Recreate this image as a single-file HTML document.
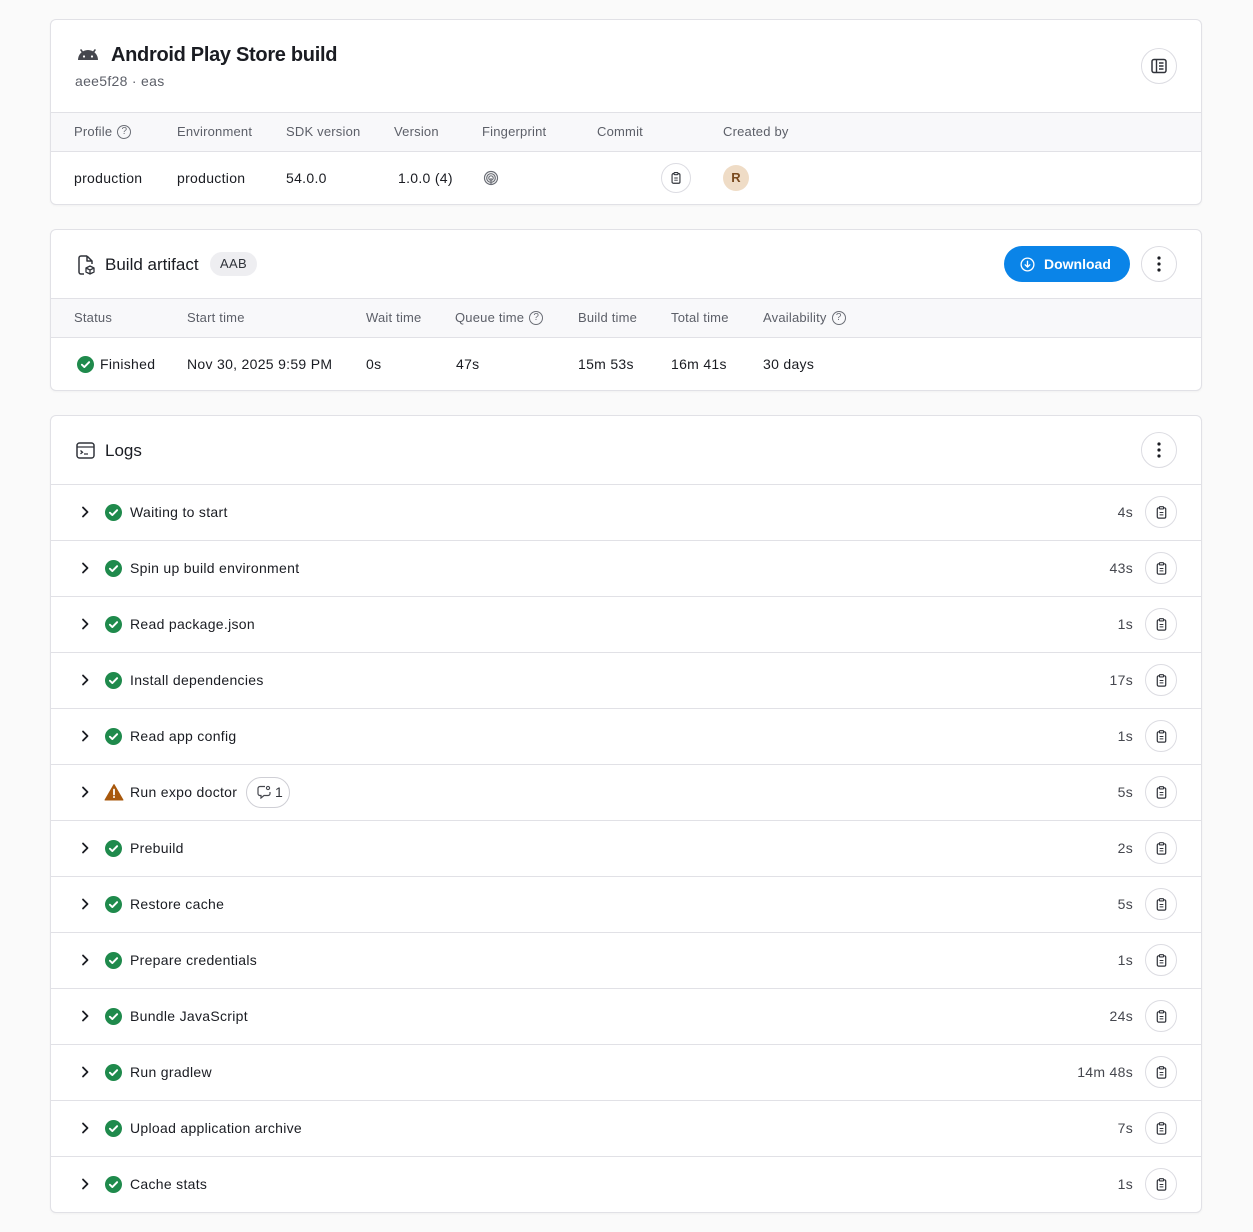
<!DOCTYPE html>
<html><head><meta charset="utf-8"><style>
*{box-sizing:border-box;margin:0;padding:0}
body{width:1253px;height:1232px;background:#fafafa;font-family:"Liberation Sans",Arial,sans-serif;color:#1a1c22;font-size:14px;position:relative;overflow:hidden;letter-spacing:.3px}
.card{position:absolute;left:50px;width:1152px;background:#fff;border:1px solid #e1e1e6;border-radius:6px;overflow:hidden;box-shadow:0 1px 2px rgba(0,0,0,.04)}
.a{position:absolute;white-space:nowrap}
.th{position:absolute;left:0;right:0;background:#f8f8fa;border-top:1px solid #e1e1e6;border-bottom:1px solid #e1e1e6}
.h{color:#5c5f68;font-size:13px;display:flex;align-items:center;letter-spacing:.2px}
.circ{position:absolute;width:36px;height:36px;border:1px solid #dcdce2;border-radius:50%;background:#fff;display:flex;align-items:center;justify-content:center}
.row{position:absolute;left:0;right:0;height:56px;border-top:1px solid #e1e1e6}
.q{display:inline-block;width:14px;height:14px;border:1.3px solid #6b6e76;border-radius:50%;font-size:10px;text-align:center;line-height:12px;color:#6b6e76;margin-left:5px;letter-spacing:0}
</style></head><body>
<svg width="0" height="0" style="position:absolute"><defs>
<symbol id="ok" viewBox="0 0 16 16"><circle cx="8" cy="8" r="8" fill="#1f8a4c"/><path d="M4.6 8.2l2.3 2.2 4.5-4.6" stroke="#fff" stroke-width="1.8" fill="none" stroke-linecap="round" stroke-linejoin="round"/></symbol>
<symbol id="chev" viewBox="0 0 16 16"><path d="M6 3.5l4.5 4.5L6 12.5" stroke="#1a1c22" stroke-width="1.8" fill="none" stroke-linecap="round" stroke-linejoin="round"/></symbol>
<symbol id="clip" viewBox="0 0 16 16"><rect x="3.5" y="3" width="9" height="11" rx="1.5" stroke="#30333a" stroke-width="1.3" fill="none"/><rect x="5.8" y="1.8" width="4.4" height="2.4" rx=".6" fill="#fff" stroke="#30333a" stroke-width="1.2"/><path d="M6 8h4M6 10.5h4" stroke="#30333a" stroke-width="1.1"/></symbol>
</defs></svg>

<!-- card 1 -->
<div class="card" style="top:19px;height:186px">
 <svg class="a" style="left:25px;top:27px" width="24" height="14" viewBox="0 0 24 14"><path d="M2 13a10 10 0 0 1 20 0z" fill="#45474e"/><path d="M5 3l2.5 3.5M19 3l-2.5 3.5" stroke="#45474e" stroke-width="1.6" stroke-linecap="round"/><circle cx="8" cy="9.5" r="1.1" fill="#fff"/><circle cx="16" cy="9.5" r="1.1" fill="#fff"/></svg>
 <div class="a" style="left:60px;top:24px;font-size:20px;font-weight:bold;letter-spacing:-.3px">Android Play Store build</div>
 <div class="a" style="left:24px;top:53px;color:#5c5f68;font-size:14px">aee5f28 · eas</div>
 <div class="circ" style="left:1090px;top:28px"><svg width="18" height="18" viewBox="0 0 18 18"><rect x="2" y="2.5" width="14" height="13" rx="2" stroke="#30333a" stroke-width="1.5" fill="none"/><path d="M6.5 2.5v13M9 6h4.5M9 9h4.5M9 12h4.5" stroke="#30333a" stroke-width="1.4"/></svg></div>
 <div class="th" style="top:92px;height:40px">
  <div class="a h" style="left:23px;top:11px">Profile<span class="q">?</span></div>
  <div class="a h" style="left:126px;top:11px">Environment</div>
  <div class="a h" style="left:235px;top:11px">SDK version</div>
  <div class="a h" style="left:343px;top:11px">Version</div>
  <div class="a h" style="left:431px;top:11px">Fingerprint</div>
  <div class="a h" style="left:546px;top:11px">Commit</div>
  <div class="a h" style="left:672px;top:11px">Created by</div>
 </div>
 <div class="a" style="left:23px;top:150px">production</div>
 <div class="a" style="left:126px;top:150px">production</div>
 <div class="a" style="left:235px;top:150px">54.0.0</div>
 <div class="a" style="left:347px;top:150px">1.0.0 (4)</div>
 <svg class="a" style="left:432px;top:150px" width="16" height="16" viewBox="0 0 16 16"><g stroke="#6b6e76" stroke-width="1.2" fill="none"><circle cx="8" cy="8" r="6.5"/><circle cx="8" cy="8" r="4.3"/><circle cx="8" cy="8" r="2.2"/><path d="M8 8v6"/></g></svg>
 <div class="circ" style="left:610px;top:143px;width:30px;height:30px"><svg width="14" height="14"><use href="#clip"/></svg></div>
 <div class="a" style="left:672px;top:145px;width:26px;height:26px;border-radius:50%;background:#efdcc6;color:#7a4a1e;font-weight:bold;font-size:13px;text-align:center;line-height:26px;letter-spacing:0">R</div>
</div>

<!-- card 2 -->
<div class="card" style="top:229px;height:162px">
 <svg class="a" style="left:25px;top:24px" width="20" height="22" viewBox="0 0 20 22"><path d="M11 2H5a2 2 0 0 0-2 2v14a2 2 0 0 0 2 2h3M11 2l5 5v3M11 2v5h5" stroke="#30333a" stroke-width="1.5" fill="none" stroke-linejoin="round"/><path d="M14 12l4 2v4l-4 2-4-2v-4z M10 14l4 2 4-2M14 16v4" stroke="#30333a" stroke-width="1.3" fill="none" stroke-linejoin="round"/></svg>
 <div class="a" style="left:54px;top:25px;font-size:17px;letter-spacing:0">Build artifact</div>
 <div class="a" style="left:159px;top:22px;height:24px;padding:0 10px;border-radius:12px;background:#eeeef1;font-size:13px;line-height:24px;color:#30333a">AAB</div>
 <div class="a" style="left:953px;top:16px;width:126px;height:36px;border-radius:18px;background:#0a84e8;color:#fff;font-weight:bold;font-size:14px;line-height:36px;padding-left:40px;letter-spacing:0">Download</div>
 <svg class="a" style="left:969px;top:27px" width="15" height="15" viewBox="0 0 16 16"><circle cx="8" cy="8" r="6.8" stroke="#fff" stroke-width="1.4" fill="none"/><path d="M8 4.5v6M5.5 8.3L8 10.8l2.5-2.5" stroke="#fff" stroke-width="1.4" fill="none" stroke-linecap="round"/></svg>
 <div class="circ" style="left:1090px;top:16px"><svg width="4" height="16"><circle cx="2" cy="2" r="1.6" fill="#1a1c22"/><circle cx="2" cy="8" r="1.6" fill="#1a1c22"/><circle cx="2" cy="14" r="1.6" fill="#1a1c22"/></svg></div>
 <div class="th" style="top:68px;height:40px">
  <div class="a h" style="left:23px;top:11px">Status</div>
  <div class="a h" style="left:136px;top:11px">Start time</div>
  <div class="a h" style="left:315px;top:11px">Wait time</div>
  <div class="a h" style="left:404px;top:11px">Queue time<span class="q">?</span></div>
  <div class="a h" style="left:527px;top:11px">Build time</div>
  <div class="a h" style="left:620px;top:11px">Total time</div>
  <div class="a h" style="left:712px;top:11px">Availability<span class="q">?</span></div>
 </div>
 <svg class="a" style="left:26px;top:126px" width="17" height="17"><use href="#ok"/></svg>
 <div class="a" style="left:49px;top:126px">Finished</div>
 <div class="a" style="left:136px;top:126px">Nov 30, 2025 9:59 PM</div>
 <div class="a" style="left:315px;top:126px">0s</div>
 <div class="a" style="left:405px;top:126px">47s</div>
 <div class="a" style="left:527px;top:126px">15m 53s</div>
 <div class="a" style="left:620px;top:126px">16m 41s</div>
 <div class="a" style="left:712px;top:126px">30 days</div>
</div>

<!-- card 3 -->
<div class="card" style="top:415px;height:798px">
 <svg class="a" style="left:25px;top:26px" width="19" height="17" viewBox="0 0 19 17"><rect x="1" y="1" width="17" height="15" rx="2.5" stroke="#30333a" stroke-width="1.5" fill="none"/><path d="M1 5h17M4.5 8.5l2 1.7-2 1.7M8 12h4" stroke="#30333a" stroke-width="1.3" fill="none"/></svg>
 <div class="a" style="left:54px;top:25px;font-size:17px;letter-spacing:0">Logs</div>
 <div class="circ" style="left:1090px;top:16px"><svg width="4" height="16"><circle cx="2" cy="2" r="1.6" fill="#1a1c22"/><circle cx="2" cy="8" r="1.6" fill="#1a1c22"/><circle cx="2" cy="14" r="1.6" fill="#1a1c22"/></svg></div>
 <div id="rows"></div>
</div>
<script>
var d=[["Waiting to start","4s"],["Spin up build environment","43s"],["Read package.json","1s"],["Install dependencies","17s"],["Read app config","1s"],["Run expo doctor","5s",1],["Prebuild","2s"],["Restore cache","5s"],["Prepare credentials","1s"],["Bundle JavaScript","24s"],["Run gradlew","14m 48s"],["Upload application archive","7s"],["Cache stats","1s"]];
var h="";d.forEach(function(r,i){var t=68+i*56;
var ic=r[2]?'<svg class="a" style="left:53px;top:18px" width="20" height="18" viewBox="0 0 20 18"><path d="M10 1.5L19 17H1z" fill="#a8580c" stroke="#a8580c" stroke-linejoin="round"/><path d="M10 6.5v5" stroke="#fff" stroke-width="1.8" stroke-linecap="round"/><circle cx="10" cy="14" r="1" fill="#fff"/></svg><div class="a" style="left:195px;top:12px;width:44px;height:31px;border:1px solid #cfcfd5;border-radius:16px;font-size:14px;line-height:29px;padding-left:28px;color:#30333a">1</div><svg class="a" style="left:206px;top:20px" width="14" height="14" viewBox="0 0 14 14"><path d="M8 1.5H3a2 2 0 0 0-2 2v5a2 2 0 0 0 2 2h1v2.5l3-2.5h4a2 2 0 0 0 2-2V7" stroke="#45474e" stroke-width="1.2" fill="none"/><circle cx="11" cy="3" r="1.6" stroke="#45474e" stroke-width="1.1" fill="none"/></svg>':'<svg class="a" style="left:54px;top:19px" width="17" height="17"><use href="#ok"/></svg>';
h+='<div class="row" style="top:'+t+'px"><svg class="a" style="left:26px;top:19px" width="16" height="16"><use href="#chev"/></svg>'+ic+'<div class="a" style="left:79px;top:19px">'+r[0]+'</div><div class="a" style="right:68px;top:19px;color:#45474e">'+r[1]+'</div><div class="circ" style="left:1094px;top:11px;width:32px;height:32px"><svg width="15" height="15"><use href="#clip"/></svg></div></div>';});
document.getElementById("rows").innerHTML=h;
</script>
</body></html>
